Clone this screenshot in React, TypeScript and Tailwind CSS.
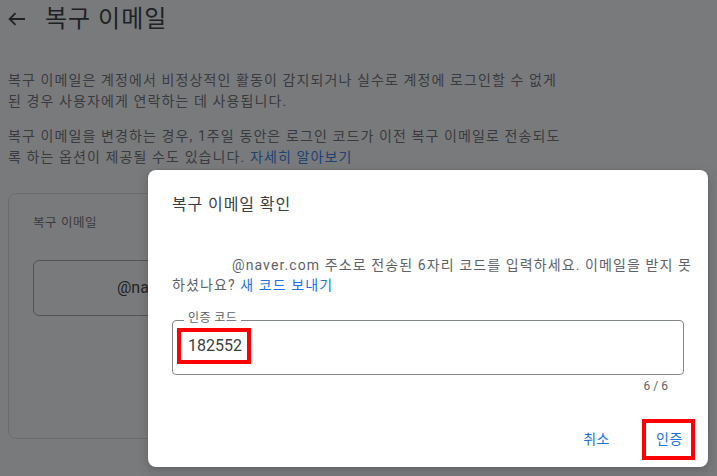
import React from "react";

function BackArrow() {
  return (
    <svg width="18" height="14" viewBox="0 0 18 14" fill="none" className="shrink-0">
      <path d="M17 7H1.8M7.5 1.2L1.6 7l5.9 5.8" stroke="#202124" strokeWidth="1.8" />
    </svg>
  );
}

export default function App() {
  return (
    <div className="relative w-[717px] h-[476px] overflow-hidden bg-white font-['Roboto','Noto_Sans_CJK_KR',sans-serif]">
      {/* page behind the dialog */}
      <div className="flex items-center h-[38px] pl-2">
        <BackArrow />
        <h1 className="ml-[19px] text-[24px] leading-8 tracking-[1px] text-[#202124]">복구 이메일</h1>
      </div>

      <div className="px-2 pt-[32px] text-[14px] leading-[21px] tracking-[1.1px] text-[#5f6368]">
        <p className="whitespace-nowrap">
          복구 이메일은 계정에서 비정상적인 활동이 감지되거나 실수로 계정에 로그인할 수 없게
          <br />된 경우 사용자에게 연락하는 데 사용됩니다.
        </p>
        <p className="mt-[14px] whitespace-nowrap">
          복구 이메일을 변경하는 경우, 1주일 동안은 로그인 코드가 이전 복구 이메일로 전송되도
          <br />록 하는 옵션이 제공될 수도 있습니다. <span className="text-[#1a73e8]">자세히 알아보기</span>
        </p>
      </div>

      <div className="mx-2 mt-[25px] h-[246px] rounded-lg border border-[#dadce0] px-6 pt-[21px]">
        <div className="text-[12.5px] leading-4 tracking-[0.6px] text-[#5f6368]">복구 이메일</div>
        <div className="mt-[29px] h-[56px] rounded-md border border-[#9aa0a6] flex items-center px-4 text-[16px] text-[#202124]">
          <span className="inline-block w-[67px]" />
          @naver.com
        </div>
      </div>

      {/* scrim */}
      <div className="absolute inset-0 bg-[rgba(32,33,36,0.6)]" />

      {/* dialog */}
      <div className="absolute left-[148px] top-[170px] w-[560px] rounded-lg bg-white shadow-[0_1px_3px_rgba(60,64,67,0.3),0_4px_8px_3px_rgba(60,64,67,0.15)] pl-6 pr-[24px] pt-[23px] pb-[7px]">
        <h2 className="text-[16px] leading-6 tracking-[0.9px] text-[#3c4043]">복구 이메일 확인</h2>

        <p className="mt-[38px] text-[14px] leading-5 tracking-[1.1px] text-[#5f6368] whitespace-nowrap">
          <span className="inline-block w-[60px]" />
          @naver.com 주소로 전송된 6자리 코드를 입력하세요. 이메일을 받지 못
          <br />
          하셨나요? <span className="text-[#1a73e8]">새 코드 보내기</span>
        </p>

        <div className="relative mt-[25px] h-[55px] rounded border border-[#80868b] pl-[4px] pt-[7px]">
          <span className="absolute -top-[11px] left-[11px] bg-white px-1 text-[12px] leading-4 tracking-[0.4px] text-[#5f6368]">
            인증 코드
          </span>
          <div className="flex items-center w-[74px] h-[36px] border-4 border-[#ff0000] pl-[7px] text-[16px] text-[#3c4043]">
            182552
          </div>
        </div>

        <div className="mt-[3px] pr-4 text-right text-[12px] leading-4 text-[#5f6368]">6 / 6</div>

        <div className="mt-[25px] flex items-center justify-end -mr-[11px]">
          <button className="h-9 px-3 text-[14px] tracking-[0.5px] text-[#1a73e8]">취소</button>
          <button className="ml-[20px] flex items-center justify-center w-[53px] h-[41px] border-4 border-[#ff0000] pl-[2px] text-[14px] tracking-[0.5px] text-[#1a73e8]">
            인증
          </button>
        </div>
      </div>
    </div>
  );
}
